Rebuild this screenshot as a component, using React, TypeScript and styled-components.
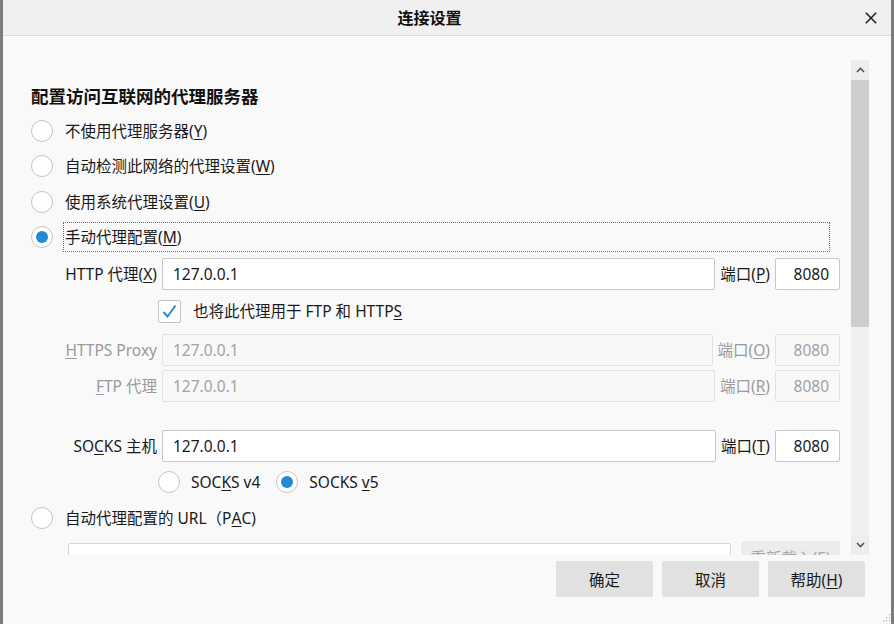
import React from "react";
import styled, { createGlobalStyle } from "styled-components";

const GlobalStyle = createGlobalStyle`
  html, body { margin: 0; padding: 0; background: #f9f9f9; }
  body {
    font-family: "Noto Sans", "Noto Sans CJK SC", sans-serif;
    color: #1a1a1a;
    font-size: 15.5px;
  }
  * { box-sizing: border-box; }
`;

const Window = styled.div`
  width: 894px;
  height: 624px;
  display: flex;
  flex-direction: column;
  border-left: 3px solid #7c7c7c;
  border-right: 3px solid #7c7c7c;
  background: #f9f9f9;
  position: relative;
  overflow: hidden;
`;

const TitleBar = styled.div`
  height: 36px;
  flex: none;
  display: flex;
  align-items: center;
  background: #f0f0f0;
  border-bottom: 1px solid #d9d9d9;
`;

const Title = styled.div`
  flex: 1;
  text-align: center;
  font-size: 16px;
  font-weight: 700;
  line-height: 20px;
  color: #111;
`;

const CloseButton = styled.button`
  width: 30px;
  height: 30px;
  margin-right: 5px;
  border: 0;
  background: transparent;
  padding: 0;
  display: flex;
  align-items: center;
  justify-content: center;
`;

const ScrollRegion = styled.div`
  flex: none;
  margin-top: 24px;
  height: 495px;
  display: flex;
`;

const Content = styled.div`
  flex: 1;
  overflow: hidden;
  padding: 24px 11px 0 28px;
  display: flex;
  flex-direction: column;
  & > * { flex-shrink: 0; }
`;

const Heading = styled.h2`
  margin: 0;
  font-size: 17.5px;
  font-weight: 700;
  line-height: 24px;
  color: #111;
`;

const OptionList = styled.div`
  margin-top: 7.5px;
  display: flex;
  flex-direction: column;
  gap: 5.5px;
`;

const OptionRow = styled.div<{ $mt?: number }>`
  height: 30px;
  display: flex;
  align-items: center;
  margin-top: ${(p) => p.$mt ?? 0}px;
`;

const Radio = styled.span<{ $checked?: boolean }>`
  width: 22px;
  height: 22px;
  flex: none;
  border-radius: 50%;
  border: 1px solid #c4c4c4;
  background: #fff;
  display: flex;
  align-items: center;
  justify-content: center;
  &::after {
    content: "";
    width: 12px;
    height: 12px;
    border-radius: 50%;
    background: ${(p) => (p.$checked ? "#1f8bd5" : "transparent")};
  }
`;

const OptionLabel = styled.span<{ $focused?: boolean }>`
  flex: 1;
  height: 30px;
  margin-left: 10px;
  margin-right: 10px;
  padding: 0 1px;
  display: flex;
  align-items: center;
  line-height: 20px;
  border: 1px dotted ${(p) => (p.$focused ? "#6f6f6f" : "transparent")};
`;

const Key = styled.span`
  text-decoration: underline;
  text-underline-offset: 2px;
  text-decoration-thickness: 1px;
`;

const FieldRow = styled.div<{ $mt?: number; $h?: number; $indent?: number }>`
  height: ${(p) => p.$h ?? 32}px;
  display: flex;
  align-items: center;
  margin-top: ${(p) => p.$mt ?? 0}px;
  padding-left: ${(p) => p.$indent ?? 32}px;
`;

const FieldLabel = styled.span<{ $disabled?: boolean }>`
  width: 94px;
  flex: none;
  text-align: right;
  white-space: nowrap;
  line-height: 20px;
  color: ${(p) => (p.$disabled ? "#9a9a9a" : "#1a1a1a")};
`;

const TextInput = styled.input`
  flex: 1;
  min-width: 0;
  height: 32px;
  margin-left: 5px;
  padding: 0 10px;
  border: 1px solid #c6c6c6;
  border-radius: 2px;
  background: #fff;
  font: inherit;
  font-size: 15.5px;
  color: #1a1a1a;
  outline: none;
  &:disabled {
    background: #f8f8f8;
    border-color: #e2e2e2;
    color: #a2a2a2;
  }
`;

const PortLabel = styled.span<{ $disabled?: boolean }>`
  flex: none;
  margin-left: 5px;
  white-space: nowrap;
  line-height: 20px;
  color: ${(p) => (p.$disabled ? "#9a9a9a" : "#1a1a1a")};
`;

const PortInput = styled(TextInput)`
  flex: none;
  width: 65px;
  text-align: right;
`;

const Checkbox = styled.span`
  width: 23px;
  height: 23px;
  flex: none;
  border: 1px solid #c4c4c4;
  border-radius: 2px;
  background: #fff;
  display: flex;
  align-items: center;
  justify-content: center;
`;

const CheckText = styled.span`
  margin-left: 12px;
  line-height: 20px;
`;

const SubRadioLabel = styled.span`
  margin-left: 11px;
  margin-right: 16px;
  line-height: 20px;
`;

const PacRow = styled.div`
  margin-top: 8px;
  display: flex;
  align-items: flex-start;
  padding-left: 37px;
`;

const PacInput = styled(TextInput)`
  margin-left: 0;
  margin-top: 2px;
  border-color: #d6d6d6;
`;

const ReloadButton = styled.button`
  flex: none;
  width: 99px;
  height: 32px;
  margin-left: 10px;
  border: 0;
  border-radius: 2px;
  background: #ececec;
  color: #a8a8a8;
  font: inherit;
  font-size: 15.5px;
`;

const Scrollbar = styled.div`
  width: 18px;
  flex: none;
  margin-right: 22px;
  display: flex;
  flex-direction: column;
  background: #f0f0f0;
`;

const ArrowCell = styled.div`
  height: 20px;
  flex: none;
  display: flex;
  align-items: center;
  justify-content: center;
  background: #ededed;
`;

const Thumb = styled.div`
  height: 247px;
  flex: none;
  background: #cdcdcd;
`;

const Track = styled.div`
  flex: 1;
`;

const Footer = styled.div`
  flex: 1;
  display: flex;
  justify-content: flex-end;
  align-items: flex-start;
  gap: 9px;
  padding: 6px 26px 0 0;
`;

const DialogButton = styled.button`
  width: 97px;
  height: 36px;
  border: 0;
  border-radius: 2px;
  background: #e1e1e1;
  color: #1a1a1a;
  font: inherit;
  font-size: 15.5px;
  padding: 0;
`;

const Grip = styled.svg`
  position: absolute;
  right: 0;
  bottom: 2px;
`;

const Chevron = ({ up }: { up?: boolean }) => (
  <svg width="9" height="6" viewBox="0 0 9 6">
    <polyline
      points={up ? "1,5 4.5,1.5 8,5" : "1,1 4.5,4.5 8,1"}
      fill="none"
      stroke="#555"
      strokeWidth="1.6"
    />
  </svg>
);

export default function App() {
  return (
    <>
      <GlobalStyle />
      <Window>
        <TitleBar>
          <Title>连接设置</Title>
          <CloseButton aria-label="关闭">
            <svg width="12" height="12" viewBox="0 0 12 12">
              <path d="M0.8 0.8 L11.2 11.2 M11.2 0.8 L0.8 11.2" stroke="#1a1a1a" strokeWidth="1.5" />
            </svg>
          </CloseButton>
        </TitleBar>

        <ScrollRegion>
          <Content>
            <Heading>配置访问互联网的代理服务器</Heading>
            <OptionList>
              <OptionRow>
                <Radio />
                <OptionLabel>
                  不使用代理服务器(<Key>Y</Key>)
                </OptionLabel>
              </OptionRow>
              <OptionRow>
                <Radio />
                <OptionLabel>
                  自动检测此网络的代理设置(<Key>W</Key>)
                </OptionLabel>
              </OptionRow>
              <OptionRow>
                <Radio />
                <OptionLabel>
                  使用系统代理设置(<Key>U</Key>)
                </OptionLabel>
              </OptionRow>
              <OptionRow>
                <Radio $checked />
                <OptionLabel $focused>
                  手动代理配置(<Key>M</Key>)
                </OptionLabel>
              </OptionRow>
            </OptionList>

            <FieldRow $mt={6}>
              <FieldLabel>
                HTTP 代理(<Key>X</Key>)
              </FieldLabel>
              <TextInput readOnly value="127.0.0.1" />
              <PortLabel>
                端口(<Key>P</Key>)
              </PortLabel>
              <PortInput readOnly value="8080" />
            </FieldRow>

            <FieldRow $mt={4} $h={34} $indent={127}>
              <Checkbox>
                <svg width="17" height="17" viewBox="0 0 17 17">
                  <polyline points="2.5,9 6.5,13.5 14.5,2.5" fill="none" stroke="#2a8ad4" strokeWidth="2" />
                </svg>
              </Checkbox>
              <CheckText>
                也将此代理用于 FTP 和 HTTP<Key>S</Key>
              </CheckText>
            </FieldRow>

            <FieldRow $mt={6}>
              <FieldLabel $disabled>
                <Key>H</Key>TTPS Proxy
              </FieldLabel>
              <TextInput disabled value="127.0.0.1" />
              <PortLabel $disabled>
                端口(<Key>O</Key>)
              </PortLabel>
              <PortInput disabled value="8080" />
            </FieldRow>

            <FieldRow $mt={4}>
              <FieldLabel $disabled>
                <Key>F</Key>TP 代理
              </FieldLabel>
              <TextInput disabled value="127.0.0.1" />
              <PortLabel $disabled>
                端口(<Key>R</Key>)
              </PortLabel>
              <PortInput disabled value="8080" />
            </FieldRow>

            <FieldRow $mt={28}>
              <FieldLabel>
                SO<Key>C</Key>KS 主机
              </FieldLabel>
              <TextInput readOnly value="127.0.0.1" />
              <PortLabel>
                端口(<Key>T</Key>)
              </PortLabel>
              <PortInput readOnly value="8080" />
            </FieldRow>

            <FieldRow $mt={5} $h={30} $indent={127}>
              <Radio />
              <SubRadioLabel>
                SOC<Key>K</Key>S v4
              </SubRadioLabel>
              <Radio $checked />
              <SubRadioLabel>
                SOCKS <Key>v</Key>5
              </SubRadioLabel>
            </FieldRow>

            <OptionRow $mt={6}>
              <Radio />
              <OptionLabel>
                自动代理配置的 URL（P<Key>A</Key>C)
              </OptionLabel>
            </OptionRow>

            <PacRow>
              <PacInput readOnly value="" />
              <ReloadButton disabled>重新载入(E)</ReloadButton>
            </PacRow>
          </Content>

          <Scrollbar>
            <ArrowCell>
              <Chevron up />
            </ArrowCell>
            <Thumb />
            <Track />
            <ArrowCell>
              <Chevron />
            </ArrowCell>
          </Scrollbar>
        </ScrollRegion>

        <Footer>
          <DialogButton>确定</DialogButton>
          <DialogButton>取消</DialogButton>
          <DialogButton>
            帮助(<Key>H</Key>)
          </DialogButton>
        </Footer>

        <Grip width="9" height="9" viewBox="0 0 9 9">
          <rect x="7" y="1" width="1.2" height="1.2" fill="#a8a8a8" />
          <rect x="4" y="4" width="1.2" height="1.2" fill="#a8a8a8" />
          <rect x="7" y="4" width="1.2" height="1.2" fill="#a8a8a8" />
          <rect x="1" y="7" width="1.2" height="1.2" fill="#a8a8a8" />
          <rect x="4" y="7" width="1.2" height="1.2" fill="#a8a8a8" />
          <rect x="7" y="7" width="1.2" height="1.2" fill="#a8a8a8" />
        </Grip>
      </Window>
    </>
  );
}
